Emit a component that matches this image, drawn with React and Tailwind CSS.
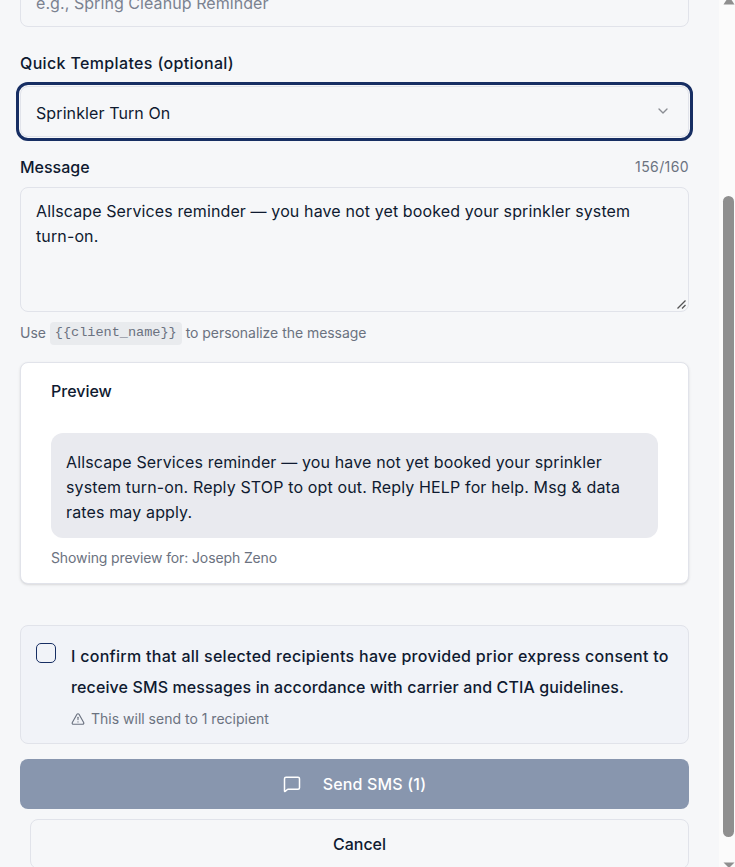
import React from 'react'
import { ChevronDown, MessageSquare, TriangleAlert } from 'lucide-react'

function Scrollbar() {
  return (
    <div className="flex h-full w-4 shrink-0 flex-col items-center bg-[#fbfbfb] pl-[3px]">
      <svg className="-mt-[5px] h-[10px] w-3 shrink-0" viewBox="0 0 12 10">
        <path d="M6 1 L11.5 9.5 L0.5 9.5 Z" fill="#8f8f8f" />
      </svg>
      <div className="mt-[191px] h-[641px] w-[11px] shrink-0 rounded-full bg-[#8f8f8f]" />
      <svg className="mt-[25px] h-[10px] w-3 shrink-0" viewBox="0 0 12 10">
        <path d="M0.5 0.5 L11.5 0.5 L6 6 Z" fill="#8f8f8f" />
      </svg>
    </div>
  )
}

function App() {
  return (
    <div className="flex h-[867px] w-[735px] overflow-hidden bg-[#f6f7f9] font-['Inter',sans-serif] text-[#0f1a30]">
      <div className="min-w-0 flex-1 pl-5 pr-[30px]">
        {/* Campaign name, scrolled off the top */}
        <div className="-mt-[23px] flex h-[50px] items-center rounded-lg border border-[#e1e3ea] px-[15px] pt-0.5 text-base tracking-[0.07px] text-[#7b8290]">
          e.g., Spring Cleanup Reminder
        </div>

        {/* Templates */}
        <div className="mt-6 text-base leading-6 font-medium tracking-[0.35px]">Quick Templates (optional)</div>
        <div className="mt-[11px] flex h-[51px] items-center justify-between rounded-lg border border-[#e1e3ea] pl-[15px] pr-[17px] pt-0.5 text-base tracking-[0.1px] outline-[3px] outline-offset-[1px] outline-[#172e63]">
          <span>Sprinkler Turn On</span>
          <ChevronDown className="-mt-1 h-4 w-4 text-[#8a8d93]" />
        </div>

        {/* Message */}
        <div className="mt-[18px] flex items-center justify-between">
          <span className="text-base leading-6 font-medium">Message</span>
          <span className="text-sm leading-5 tracking-[0.4px] text-[#6b7280]">156/160</span>
        </div>
        <div className="relative mt-2 h-[125px] rounded-lg border border-[#e1e3ea] py-[11px] pl-[15px] pr-8 text-base leading-[25px] tracking-[0.12px]">
          Allscape Services reminder — you have not yet booked your sprinkler system turn-on.
          <svg className="absolute right-[1px] bottom-[1px] h-3 w-3" viewBox="0 0 12 12">
            <path d="M2.5 10.5 L10.5 2.5 M7 10.5 L10.5 7" stroke="#555" strokeWidth="1.3" />
          </svg>
        </div>
        <div className="mt-[9px] flex h-6 items-center text-sm tracking-[-0.04px] text-[#6b7280]">
          Use
          <code className="mx-[4px] flex h-[23px] items-center rounded bg-[#e9ebee] px-[5px] font-['Liberation_Mono',monospace] text-[13.6px]">{'{{client_name}}'}</code>
          to personalize the message
        </div>

        {/* Preview */}
        <div className="mt-[17px] h-[222px] rounded-lg border border-[#e1e3ea] bg-white px-[30px] pt-4 shadow-sm">
          <div className="text-base leading-6 font-medium">Preview</div>
          <div className="mt-[30px] rounded-xl bg-[#e9eaef] px-[15px] pt-[17px] pb-[13px] text-base leading-[25px] tracking-[0.14px]">
            Allscape Services reminder — you have not yet booked your sprinkler system turn-on. Reply STOP to opt out. Reply HELP for help. Msg &amp; data rates may apply.
          </div>
          <div className="mt-[10px] text-sm leading-5 tracking-[-0.12px] text-[#6b7280]">Showing preview for: Joseph Zeno</div>
        </div>

        {/* Consent */}
        <div className="mt-[41px] flex h-[119px] gap-[15px] rounded-lg border border-[#e1e3ea] bg-[#f1f3f8] pl-[15px] pt-[17px]">
          <div className="h-5 w-5 shrink-0 rounded-[5px] border border-[#172e63]" />
          <div className="min-w-0">
            <div className="-mt-[2px] text-base leading-[31px] font-medium">
              <span className="block tracking-[0.29px]">I confirm that all selected recipients have provided prior express consent to</span>
              <span className="block tracking-[0.12px]">receive SMS messages in accordance with carrier and CTIA guidelines.</span>
            </div>
            <div className="mt-[6px] flex items-center gap-1.5 text-sm leading-5 text-[#6b7280]">
              <TriangleAlert className="h-[14px] w-[14px]" />
              This will send to 1 recipient
            </div>
          </div>
        </div>

        {/* Actions */}
        <div className="mt-[15px] flex h-[50px] items-center justify-center gap-[22px] rounded-lg bg-[#8896ae] text-base font-medium tracking-[0.15px] text-white">
          <MessageSquare className="h-[18px] w-[18px]" />
          Send SMS (1)
        </div>
        <div className="mt-[10px] ml-[10px] flex h-[50px] items-center justify-center rounded-lg border border-[#e1e3ea] text-base font-medium">
          Cancel
        </div>
      </div>
      <Scrollbar />
    </div>
  )
}

export default App
